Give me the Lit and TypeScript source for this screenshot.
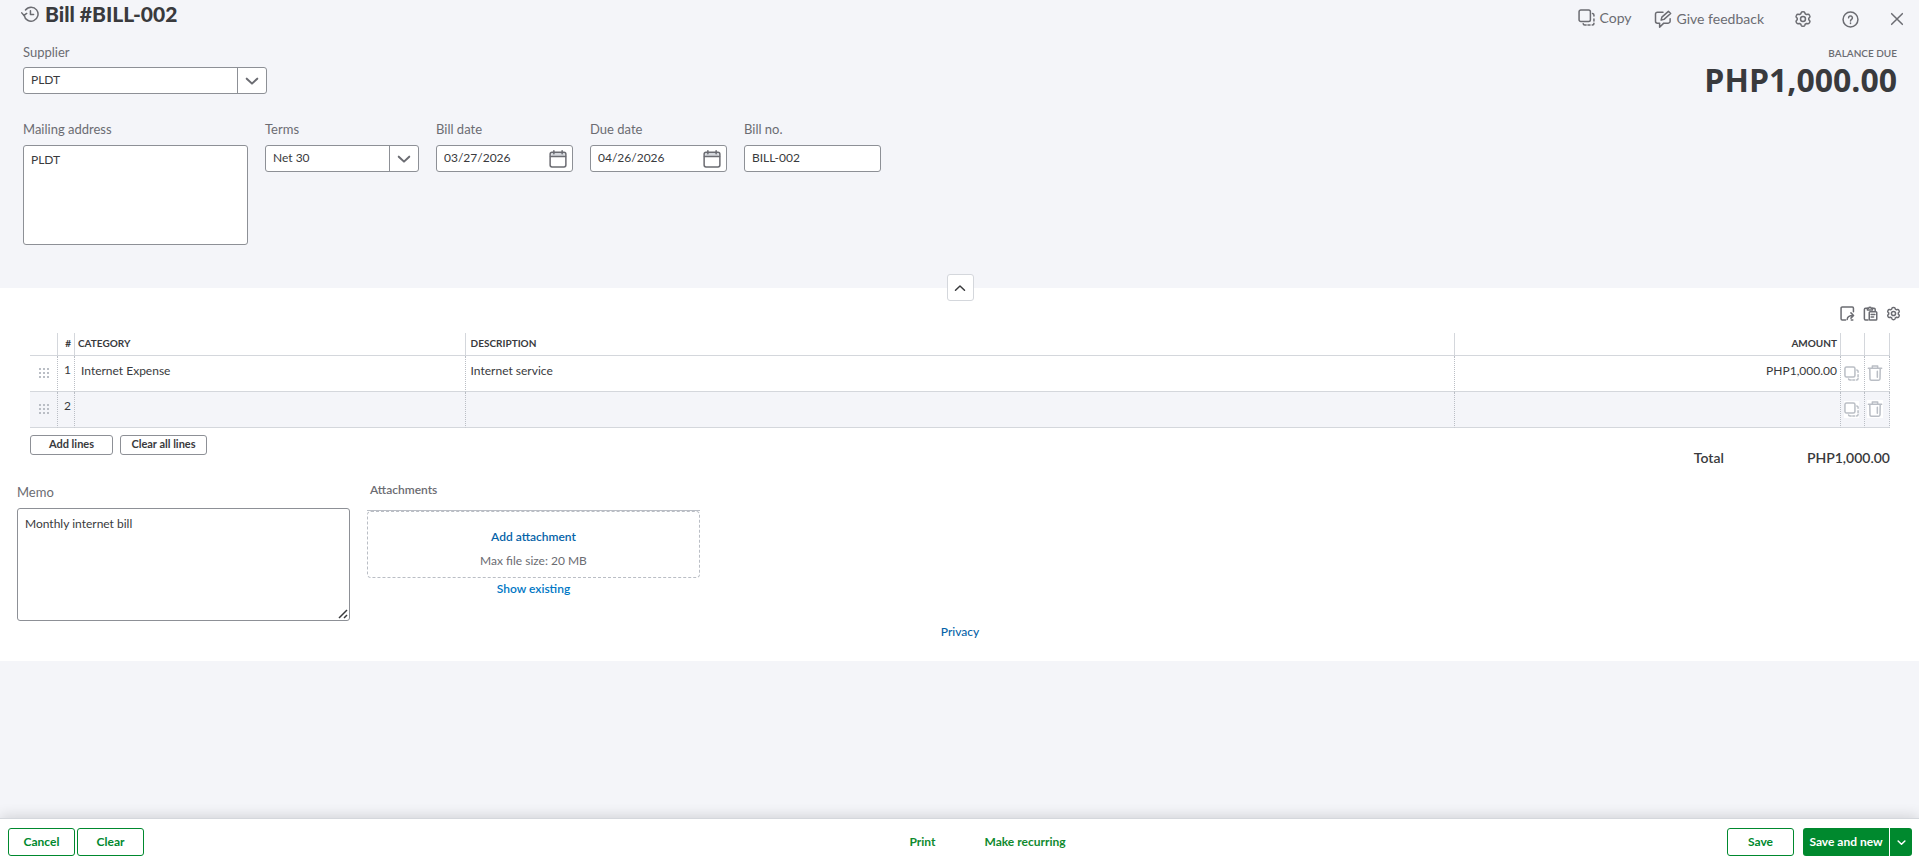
import { LitElement, html, css, svg } from "lit";
import { customElement, property } from "lit/decorators.js";

const GEAR =
  "M12 2.2C13.500 2.200 14 2.400 14.300 3.200L14.900 5L16.800 6.100L18.700 5.700C19.600 5.500 20 5.900 20.700 7.100C21.500 8.400 21.600 8.900 21 9.600L19.700 11V13L21 14.400C21.600 15.100 21.500 15.600 20.700 16.900C20 18.100 19.600 18.500 18.700 18.300L16.800 17.900L14.900 19L14.300 20.800C14 21.600 13.500 21.800 12 21.800C10.500 21.800 10 21.600 9.700 20.800L9.100 19L7.200 17.900L5.300 18.300C4.400 18.500 4 18.100 3.300 16.900C2.500 15.600 2.400 15.100 3 14.400L4.300 13V11L3 9.600C2.400 8.900 2.500 8.400 3.300 7.100C4 5.900 4.400 5.500 5.300 5.700L7.200 6.100L9.100 5L9.700 3.200C10 2.400 10.500 2.200 12 2.200Z";

const ICONS: Record<string, unknown> = {
  history: svg`<path d="M4.200 13.500A9.300 9.300 0 1 0 6 6.600"/><path d="M1 10.500l3 3.400 3.600-2.600"/><path d="M12.600 7.500v5.200h4.200"/>`,
  copy: svg`<rect x="1.500" y="1.500" width="16" height="16" rx="2.500"/><path d="M20.500 6.500q2 .3 2 2v1.500M22.500 14v3M22.500 20q0 2.500-2.500 2.500M17 22.500h-3M11.500 22.500H9.500q-2 0-2.200-1.800"/>`,
  feedback: svg`<path d="M12 3H4.500A2.500 2.500 0 0 0 2 5.500v9.500A2.500 2.500 0 0 0 4.500 17.500h3V23l5.500-5.500h6A2.500 2.500 0 0 0 21.500 15v-3.500"/><path d="M9.500 13.500l1-4L19.200 1.800l3 2.900-8.900 7.800z"/>`,
  gear: svg`<path d=${GEAR}/><circle cx="12" cy="12" r="3.300"/>`,
  help: svg`<circle cx="12" cy="12" r="10.500"/><path d="M9.300 9.700a2.700 2.700 0 1 1 4.200 2.200c-1 .7-1.500 1.100-1.500 2.200"/><path d="M12 16.900v.7"/>`,
  close: svg`<path d="M4 4l16 16M20 4L4 20"/>`,
  down: svg`<path d="M3 8l9 8.500L21 8"/>`,
  up: svg`<path d="M3 16.500L12 8l9 8.500"/>`,
  calendar: svg`<path class="tint" d="M3 4h18v4.500H3z"/><rect x="1.500" y="3" width="21" height="19.500" rx="2.500"/><path d="M2 8.700h20M6.500 1v4M17.500 1v4"/>`,
  share: svg`<path d="M21.500 9V3.500a1.800 1.800 0 0 0-1.800-1.800H3.500A1.800 1.800 0 0 0 1.700 3.500v17a1.800 1.800 0 0 0 1.800 1.800h5.500M18 22.300h2.500"/><path d="M11.500 21.500c.3-4.500 3-6.300 9.500-6.300M17.500 11l4.200 4.200-4.200 4.200"/>`,
  paste: svg`<path d="M8 22.300H4A1.800 1.800 0 0 1 2.200 20.500V5.500A1.800 1.800 0 0 1 4 3.700H7M15 3.700h2.700A1.800 1.800 0 0 1 19.500 5.500V8"/><path d="M7 6.300V3.500h2a2.200 2.200 0 0 1 4.200 0h2v2.800z"/><rect x="10" y="9" width="12" height="13.500" rx="1.500"/><path d="M13 13.500h6M13 17.500h4"/>`,
  trash: svg`<path d="M2 5h20M8 4.700V1.500h8v3.200M4.200 5.300l.3 15.500a2 2 0 0 0 2 2h11a2 2 0 0 0 2-2L19.800 5.300M15.500 9.500v9"/>`,
};

@customElement("ui-icon")
class UiIcon extends LitElement {
  @property() name = "gear";
  @property({ type: Number }) size = 16;
  @property({ type: Number }) stroke = 1.5;

  static styles = css`
    :host { display: inline-flex; flex: none; }
    svg { display: block; fill: none; stroke: currentColor; stroke-linecap: round; stroke-linejoin: round; }
    .tint { fill: #d4d7dc; stroke: none; }
  `;

  render() {
    return html`<svg width=${this.size} height=${this.size} viewBox="0 0 24 24"
      stroke-width=${(this.stroke * 24) / this.size} aria-hidden="true">${ICONS[this.name]}</svg>`;
  }
}

interface Line { no: number; category: string; description: string; amount: string; }

@customElement("app-root")
class AppRoot extends LitElement {
  private lines: Line[] = [
    { no: 1, category: "Internet Expense", description: "Internet service", amount: "PHP1,000.00" },
    { no: 2, category: "", description: "", amount: "" },
  ];

  static styles = css`
    :host {
      display: flex; flex-direction: column; min-height: 100vh; box-sizing: border-box;
      background: #f4f5f9; color: #393a3d;
      font: 12px/16px Lato, "Open Sans", sans-serif;
    }
    *, *::before { box-sizing: border-box; }
    button, input, select, textarea { font: inherit; color: inherit; margin: 0; }
    button { background: none; border: 0; padding: 0; cursor: pointer; }
    a { text-decoration: none; color: #0077c5; font-weight: 600; }

    .head { padding: 0 22px 43px 23px; display: flex; justify-content: space-between; }
    .title { display: flex; align-items: center; gap: 6px; height: 28px; margin-left: -2px; }
    .title button { color: #6b6c72; display: flex; }
    h1 { margin: 0; font-size: 21px; line-height: 28px; font-weight: 900; }
    .field { display: flex; flex-direction: column; gap: 8px; }
    .field > label { font-size: 13px; line-height: 16px; color: #6b6c72; }
    .supplier { width: 244px; margin-top: 16px; gap: 7px; }
    .details { display: flex; align-items: flex-start; gap: 17px; margin-top: 27px; }
    .w-address { width: 225px; }
    .w-terms { width: 154px; }
    .w-std { width: 137px; }
    .control {
      width: 100%; height: 27px; border: 1px solid #8d9096; border-radius: 3px; background: #fff;
      padding: 0 7px 2px; appearance: none; outline: none;
    }
    .stack { display: grid; align-items: center; }
    .stack > * { grid-area: 1 / 1; }
    .arrow {
      justify-self: end; width: 30px; height: 27px; border-left: 1px solid #8d9096; padding-right: 2px;
      display: flex; align-items: center; justify-content: center; pointer-events: none; color: #6b6c72;
    }
    .date { justify-self: end; margin-right: 6px; color: #6b6c72; display: flex; }
    textarea.control { display: block; height: 100px; padding: 6px 7px; resize: none; }

    .side { display: flex; flex-direction: column; align-items: flex-end; }
    .tools { display: flex; align-items: center; gap: 30px; height: 38px; color: #6b6c72; margin-right: -8px; }
    .tools button { display: flex; align-items: center; gap: 5px; font-size: 14px; line-height: 18px; }
    .tools .first { margin-right: -8px; padding-bottom: 3px; }
    .due { color: #6b6c72; font-size: 10px; line-height: 14px; margin-top: 8px; font-weight: 600; }
    .balance { font-family: "Open Sans", sans-serif; font-size: 32px; line-height: 40px; font-weight: 700; }

    main { background: #fff; padding: 0 29px 21px 30px; }
    .collapse { display: flex; justify-content: center; height: 18px; }
    .collapse button {
      width: 27px; height: 27px; margin-top: -14px; background: #fff; border: 1px solid #d4d7dc;
      border-radius: 3px; display: flex; align-items: center; justify-content: center;
    }
    .grid-tools { display: flex; justify-content: flex-end; gap: 8px; margin-right: -11px; color: #6b6c72; height: 27px; }
    .grid-tools button { display: flex; height: 16px; }

    table { width: 100%; table-layout: fixed; border-collapse: separate; border-spacing: 0; }
    .c-drag { width: 28px; } .c-no { width: 17px; } .c-cat { width: 21%; } .c-amt { width: 386px; }
    .c-copy { width: 24px; } .c-del { width: 25px; }
    th {
      height: 23px; padding: 0 3px 2px; text-align: left; font-size: 10px; line-height: 14px; font-weight: 700;
      border-bottom: 1px solid #d4d7dc; border-right: 1px solid #d4d7dc; white-space: nowrap;
    }
    td { height: 36px; padding: 0 3px 5px; border-bottom: 1px solid #d4d7dc; border-right: 1px dotted #babec5; }
    tr:nth-child(even) td { background: #f4f5f9; }
    td:nth-child(3) { padding-left: 6px; }
    th:nth-child(4), td:nth-child(4) { padding-left: 5px; }
    td:nth-child(2) { padding-bottom: 8px; }
    .right { text-align: right; }
    td.act { padding: 0; }
    td.act button { display: flex; margin: 0 3px; background: #fff; padding: 1px 0; color: #babec5; }
    td.act:last-child button { margin: -2px 2px 0; }
    .grip { display: block; margin: 3px 0 0 6px; fill: #babec5; }

    .under { display: flex; justify-content: space-between; margin-top: 7px; height: 47px; }
    .line-btns { display: flex; gap: 7px; }
    .line-btns button {
      height: 20px; border: 1px solid #8d9096; border-radius: 3px; font-size: 11px; line-height: 14px;
      font-weight: 700; width: 83px; padding-bottom: 2px;
    }
    .line-btns .wide { width: 87px; }
    .total { display: flex; gap: 83px; font-size: 14px; line-height: 16px; font-weight: 600; padding-top: 15px; }
    .extra { display: flex; align-items: flex-start; gap: 17px; margin-left: -13px; }
    .memo { width: 333px; margin-top: 2px; }
    textarea.tall { height: 113px; padding-top: 7px; }
    .handle { align-self: end; justify-self: end; margin: 2px; stroke: #393a3d; pointer-events: none; }
    .attach { width: 333px; display: flex; flex-direction: column; }
    .attach h2 { margin: 0 0 12px 3px; font-size: 12px; line-height: 16px; font-weight: 600; color: #6b6c72; }
    .drop { height: 68px; border-top: 1px solid #babec5; display: grid; }
    .zone {
      border: 1px dashed #babec5; border-radius: 4px; display: flex; flex-direction: column; align-items: center;
      gap: 8px; padding-top: 17px; color: #6b6c72;
    }
    .existing { align-self: center; margin-top: 3px; }
    .dark { color: #0563a8; }
    .privacy { text-align: center; margin-top: 3px; }
    .privacy a { color: #0563a8; font-weight: 500; }

    .gap { flex: 1; min-height: 16px; }
    footer {
      display: grid; grid-template-columns: 1fr auto 1fr; align-items: center; background: #fff;
      border-top: 1px solid #d4d7dc; height: 38px; padding: 9px 7px 0 8px;
      box-shadow: 0 -2px 14px rgba(0, 0, 0, 0.14); font-weight: 700;
    }
    footer div { display: flex; align-items: center; gap: 2px; }
    footer .mid { gap: 49px; color: #108a2f; padding-left: 55px; }
    footer .end { justify-content: flex-end; gap: 9px; }
    .btn { height: 28px; width: 67px; border: 1px solid #00892e; border-radius: 3px; color: #00892e; }
    footer .split { gap: 1px; }
    .split button { height: 28px; background: #00892e; color: #fff; }
    .split .go { width: 86px; border-radius: 3px 0 0 3px; white-space: nowrap; }
    .split .more { width: 22px; border-radius: 0 3px 3px 0; display: flex; align-items: center; justify-content: center; }
  `;

  private grip() {
    return html`<svg class="grip" width="10" height="10" viewBox="0 0 10 10">${[0, 4, 8].map((y) =>
      [0, 4, 8].map((x) => svg`<rect x=${x} y=${y} width="2" height="2"/>`))}</svg>`;
  }

  private dateField(id: string, label: string, value: string) {
    return html`<div class="field w-std">
      <label for=${id}>${label}</label>
      <div class="stack">
        <input class="control" id=${id} .value=${value} />
        <button class="date" aria-label="Open calendar"><ui-icon name="calendar" size="18"></ui-icon></button>
      </div>
    </div>`;
  }

  private selectField(id: string, label: string, value: string, cls: string) {
    return html`<div class="field ${cls}">
      <label for=${id}>${label}</label>
      <div class="stack">
        <select class="control" id=${id}><option>${value}</option></select>
        <span class="arrow"><ui-icon name="down" size="14" stroke="2"></ui-icon></span>
      </div>
    </div>`;
  }

  render() {
    return html`
      <header class="head">
        <div>
          <div class="title">
            <button aria-label="History"><ui-icon name="history" size="18"></ui-icon></button>
            <h1>Bill #BILL-002</h1>
          </div>
          ${this.selectField("supplier", "Supplier", "PLDT", "supplier")}
          <div class="details">
            <div class="field w-address">
              <label for="address">Mailing address</label>
              <textarea class="control" id="address" .value=${"PLDT"}></textarea>
            </div>
            ${this.selectField("terms", "Terms", "Net 30", "w-terms")}
            ${this.dateField("billdate", "Bill date", "03/27/2026")}
            ${this.dateField("duedate", "Due date", "04/26/2026")}
            <div class="field w-std">
              <label for="billno">Bill no.</label>
              <input class="control" id="billno" .value=${"BILL-002"} />
            </div>
          </div>
        </div>
        <div class="side">
          <div class="tools">
            <button class="first"><ui-icon name="copy" size="17"></ui-icon>Copy</button>
            <button><ui-icon name="feedback" size="18"></ui-icon>Give feedback</button>
            <button aria-label="Settings"><ui-icon name="gear" size="18"></ui-icon></button>
            <button aria-label="Help"><ui-icon name="help" size="17"></ui-icon></button>
            <button aria-label="Close"><ui-icon name="close" size="16"></ui-icon></button>
          </div>
          <div class="due">BALANCE DUE</div>
          <div class="balance">PHP1,000.00</div>
        </div>
      </header>

      <main>
        <div class="collapse">
          <button aria-label="Collapse header"><ui-icon name="up" size="12"></ui-icon></button>
        </div>
        <div class="grid-tools">
          <button aria-label="Export"><ui-icon name="share" size="15"></ui-icon></button>
          <button aria-label="Paste lines"><ui-icon name="paste" size="15"></ui-icon></button>
          <button aria-label="Table settings"><ui-icon name="gear" size="15"></ui-icon></button>
        </div>
        <table>
          <colgroup>
            <col class="c-drag" /><col class="c-no" /><col class="c-cat" /><col /><col class="c-amt" />
            <col class="c-copy" /><col class="c-del" />
          </colgroup>
          <thead>
            <tr>
              <th></th><th class="right">#</th><th>CATEGORY</th><th>DESCRIPTION</th>
              <th class="right">AMOUNT</th><th></th><th></th>
            </tr>
          </thead>
          <tbody>
            ${this.lines.map((l) => html`<tr>
              <td>${this.grip()}</td>
              <td class="right">${l.no}</td>
              <td>${l.category}</td>
              <td>${l.description}</td>
              <td class="right">${l.amount}</td>
              <td class="act"><button aria-label="Copy line"><ui-icon name="copy" size="15"></ui-icon></button></td>
              <td class="act"><button aria-label="Delete line"><ui-icon name="trash" size="16"></ui-icon></button></td>
            </tr>`)}
          </tbody>
        </table>
        <div class="under">
          <div class="line-btns">
            <button>Add lines</button><button class="wide">Clear all lines</button>
          </div>
          <div class="total"><span>Total</span><span>PHP1,000.00</span></div>
        </div>
        <div class="extra">
          <div class="field memo">
            <label for="memo">Memo</label>
            <div class="stack">
              <textarea class="control tall" id="memo" .value=${"Monthly internet bill"}></textarea>
              <svg class="handle" width="10" height="10" viewBox="0 0 10 10"><path d="M1 9L9 1M6 9l3-3" fill="none" stroke-width="1.5"/></svg>
            </div>
          </div>
          <div class="attach">
            <h2>Attachments</h2>
            <div class="drop"><div class="zone">
              <a class="dark" href="#">Add attachment</a>
              <span>Max file size: 20 MB</span>
            </div></div>
            <a class="existing" href="#">Show existing</a>
          </div>
        </div>
        <div class="privacy"><a href="#">Privacy</a></div>
      </main>

      <div class="gap"></div>
      <footer>
        <div><button class="btn">Cancel</button><button class="btn">Clear</button></div>
        <div class="mid"><button>Print</button><button>Make recurring</button></div>
        <div class="end">
          <button class="btn">Save</button>
          <div class="split">
            <button class="go">Save and new</button>
            <button class="more" aria-label="More save options"><ui-icon name="down" size="9"></ui-icon></button>
          </div>
        </div>
      </footer>
    `;
  }
}
